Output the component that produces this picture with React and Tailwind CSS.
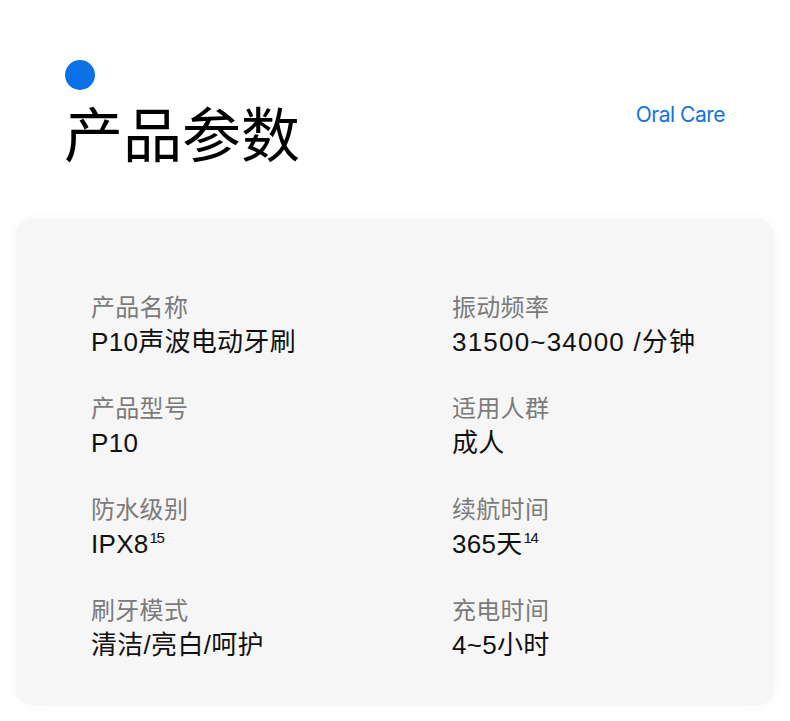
const specs = [
  [
    { label: '产品名称', value: 'P10声波电动牙刷' },
    { label: '振动频率', value: '31500~34000 /分钟', wide: true }
  ],
  [
    { label: '产品型号', value: 'P10' },
    { label: '适用人群', value: '成人' }
  ],
  [
    { label: '防水级别', value: 'IPX8', sup: '15' },
    { label: '续航时间', value: '365天', sup: '14' }
  ],
  [
    { label: '刷牙模式', value: '清洁/亮白/呵护' },
    { label: '充电时间', value: '4~5小时' }
  ]
]

const font = { fontFamily: '"Liberation Sans", "Noto Sans CJK SC", sans-serif' }

function SpecItem({ label, value, sup, wide }) {
  return (
    <div>
      <p className="text-[24px] leading-[34px] text-[#7b7b7b] tracking-[0.3px]">{label}</p>
      <p
        className={
          wide
            ? 'text-[26px] leading-[34px] text-[#111] tracking-[1.2px]'
            : 'text-[26px] leading-[34px] text-[#111] tracking-[0.3px]'
        }
      >
        {value}
        {sup && (
          <span className="text-[15px] leading-none align-[10px] ml-[1px] tracking-[-1.5px]">
            {sup}
          </span>
        )}
      </p>
    </div>
  )
}

export default function App() {
  return (
    <div className="w-[790px] h-[721px] bg-white overflow-hidden" style={font}>
      <header className="flex items-start justify-between pl-[65px] pr-[65px] pt-[60px]">
        <div>
          <div className="w-[30px] h-[30px] rounded-full bg-[#0a72e6]" />
          <h1
            className="text-[59px] leading-[80px] font-normal text-black mt-[2px] -ml-[1px]"
            style={{ fontFamily: '"Noto Sans CJK SC", sans-serif' }}
          >
            产品参数
          </h1>
        </div>
        <span
          className="text-[21px] text-[#1373e4] mt-[39px] tracking-[-0.5px]"
          style={{ fontFamily: 'Inter, "Liberation Sans", sans-serif' }}
        >
          Oral Care
        </span>
      </header>

      <section className="mx-[16px] mt-[47px] h-[486px] rounded-[16px] bg-[#f6f6f6] shadow-[0_0_12px_rgba(0,0,0,0.04)] pl-[75px] pt-[72px]">
        <div className="grid grid-cols-[361px_1fr] gap-y-[33px]">
          {specs.flat().map((s) => (
            <SpecItem key={s.label} {...s} />
          ))}
        </div>
      </section>
    </div>
  )
}
